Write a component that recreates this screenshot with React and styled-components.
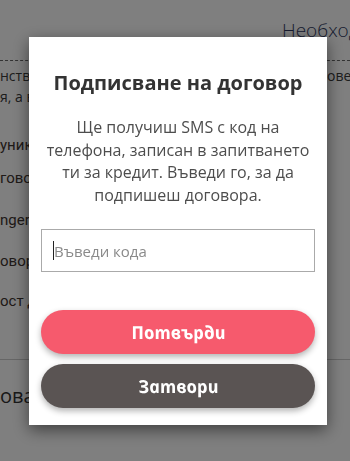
import React, { useState } from 'react'
import styled, { createGlobalStyle } from 'styled-components'

const Global = createGlobalStyle`
  html, body { margin: 0; padding: 0; }
  body {
    width: 350px;
    height: 461px;
    overflow: hidden;
    background: #fff;
    font-family: "Open Sans", "Noto Sans", sans-serif;
  }
`

const Page = styled.div`
  width: 350px;
  height: 461px;
  overflow: hidden;
  background: #fff;
  padding-top: 18px;
  box-sizing: border-box;
`

const Heading = styled.div`
  padding-left: 282px;
  white-space: nowrap;
  font-family: "Open Sans", sans-serif;
  font-weight: 300;
  font-size: 19px;
  line-height: 24px;
  color: #2e3760;
`

const Dashed = styled.div`
  margin-top: 18px;
  border-top: 1px dashed #666;
`

const Para = styled.div`
  display: flex;
  justify-content: space-between;
  white-space: nowrap;
  font-family: "Open Sans", sans-serif;
  font-size: 14px;
  line-height: 20px;
  color: #3a3a3a;
  margin-top: ${p => p.$top || 0}px;
`

const Clip = styled.span`
  width: ${p => p.$w}px;
  overflow: hidden;
`

const Rows = styled.div`
  margin-top: 28px;
  display: flex;
  flex-direction: column;
`

const Row = styled.div`
  font-family: Roboto, sans-serif;
  font-size: 15px;
  line-height: 20px;
  color: #3e3430;
  white-space: nowrap;
  margin-top: ${p => p.$top || 0}px;
`

const Rule = styled.div`
  margin-top: 48px;
  border-top: 1px solid #ccc;
`

const Total = styled.div`
  margin-top: 23px;
  font-family: "Open Sans", sans-serif;
  font-size: 20px;
  line-height: 26px;
  color: #333;
  white-space: nowrap;
`

const Overlay = styled.div`
  position: fixed;
  inset: 0;
  background: rgba(0, 0, 0, 0.5);
`

const Modal = styled.div`
  position: absolute;
  left: 29px;
  top: 37px;
  width: 298px;
  box-sizing: border-box;
  background: #fff;
  padding: 32px 12px 17px;
  box-shadow: 0 5px 15px rgba(0, 0, 0, 0.5);
  text-align: center;
`

const Title = styled.h2`
  margin: 0;
  font-family: "Open Sans", sans-serif;
  font-weight: 700;
  font-size: 20px;
  color: #333;
`

const Text = styled.p`
  margin: 20px 0 0;
  font-family: "Open Sans", sans-serif;
  font-size: 16px;
  line-height: 22.5px;
  color: #4d4d4d;
`

const Field = styled.div`
  position: relative;
  margin-top: 23px;
`

const Caret = styled.span`
  position: absolute;
  left: 12px;
  top: 12px;
  width: 1px;
  height: 19px;
  background: #222;
`

const CodeInput = styled.input`
  display: block;
  width: 100%;
  box-sizing: border-box;
  height: 43px;
  padding: 0 12px;
  border: 1px solid #aaa;
  border-radius: 0;
  outline: none;
  font-family: "Open Sans", sans-serif;
  font-size: 15px;
  color: #333;
  caret-color: transparent;
  &::placeholder { color: #8a8a8a; }
`

const Actions = styled.div`
  margin-top: 38px;
  display: flex;
  flex-direction: column;
  gap: 10px;
`

const Button = styled.button`
  height: 44px;
  border: none;
  border-radius: 22px;
  background: ${p => p.$bg};
  box-shadow: 0 3px 6px rgba(0, 0, 0, 0.3);
  color: #fff;
  cursor: pointer;
  font-family: "Open Sans", "Noto Sans", sans-serif;
  font-weight: 700;
  font-style: italic;
  font-size: 18px;
  span { display: inline-block; transform: skewX(12deg); }
`

export default function App() {
  const [code, setCode] = useState('')
  return (
    <>
      <Global />
      <Page>
        <Heading>Необходими документи</Heading>
        <Dashed />
        <Para $top={5}><span>нство</span><Clip $w={23}>оверка</Clip></Para>
        <Para $top={1}><span>я, а в</span></Para>
        <Rows>
          <Row>уникация</Row>
          <Row $top={13}>говор</Row>
          <Row $top={22}>nger</Row>
          <Row $top={21}>овор</Row>
          <Row $top={20}>ост д</Row>
        </Rows>
        <Rule />
        <Total>ова</Total>
      </Page>
      <Overlay>
        <Modal>
          <Title>Подписване на договор</Title>
          <Text>Ще получиш SMS с код на телефона, записан в запитването ти за кредит. Въведи го, за да подпишеш договора.</Text>
          <Field>
            <CodeInput
              placeholder="Въведи кода"
              value={code}
              onChange={e => setCode(e.target.value)}
            />
            {!code && <Caret />}
          </Field>
          <Actions>
            <Button $bg="#f65a6d"><span>Потвърди</span></Button>
            <Button $bg="#5a5453"><span>Затвори</span></Button>
          </Actions>
        </Modal>
      </Overlay>
    </>
  )
}
